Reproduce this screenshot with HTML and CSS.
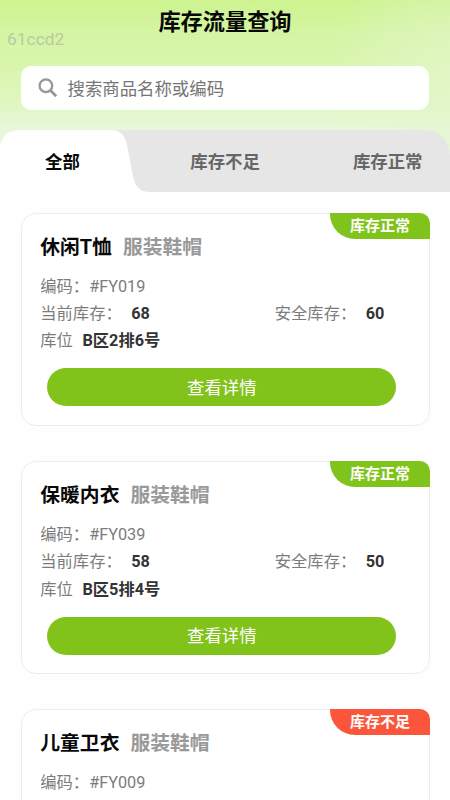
FILE: index.html
```html
<!DOCTYPE html>
<html lang="zh-CN">
<head>
<meta charset="utf-8">
<title>库存流量查询</title>
<link rel="stylesheet" href="styles.css">
</head>
<body>
<header class="header">
  <h1 class="title">库存流量查询</h1>
  <span class="mark">61ccd2</span>
  <div class="search">
    <svg class="search-icon" viewBox="0 0 20 20"><circle cx="7.9" cy="7.7" r="6.3" fill="none" stroke="#979797" stroke-width="2.3"/><path d="M12.3 12.3L18.2 18.2" stroke="#979797" stroke-width="2.8"/></svg>
    <span class="search-text">搜索商品名称或编码</span>
  </div>
</header>
<nav class="tabs">
  <svg class="tabs-shape" viewBox="0 0 450 62"><path d="M100 0H425C440 0 449 11 450 25V62H149C139 62 134 56 132 47L100 0Z" fill="#e6e6e6"/><path d="M0 62V15C3 5 9 0 20 0H111C121 0 125 6 127 15L132.500 44C135 56 139 62 149 62Z" fill="#fff"/></svg>
  <span class="tab tab-active">全部</span>
  <span class="tab">库存不足</span>
  <span class="tab tab-last">库存正常</span>
</nav>
<main class="list">
  <article class="card">
    <span class="badge">库存正常</span>
    <h2 class="name">休闲T恤<span class="category">服装鞋帽</span></h2>
    <div class="row">编码：#FY019</div>
    <div class="row"><div class="stock">当前库存：<b>68</b></div><div>安全库存：<b>60</b></div></div>
    <div class="row">库位<b>B区2排6号</b></div>
    <button class="detail">查看详情</button>
  </article>
  <article class="card">
    <span class="badge">库存正常</span>
    <h2 class="name">保暖内衣<span class="category">服装鞋帽</span></h2>
    <div class="row">编码：#FY039</div>
    <div class="row"><div class="stock">当前库存：<b>58</b></div><div>安全库存：<b>50</b></div></div>
    <div class="row">库位<b>B区5排4号</b></div>
    <button class="detail">查看详情</button>
  </article>
  <article class="card">
    <span class="badge badge-low">库存不足</span>
    <h2 class="name">儿童卫衣<span class="category">服装鞋帽</span></h2>
    <div class="row">编码：#FY009</div>
  </article>
</main>
</body>
</html>
```

FILE: styles.css
```css
* { box-sizing: border-box; }

html { background: #fefefe; }

body {
  margin: 0;
  height: 800px;
  overflow: hidden;
  font-family: Roboto, "Noto Sans CJK SC", sans-serif;
  color: #7c7c7c;
  background:
    radial-gradient(ellipse 120px 140px at 450px 75px, rgba(228, 246, 205, 0.7), rgba(228, 246, 205, 0)) no-repeat,
    linear-gradient(#cdf38f 0, #d5f5a4 35px, #daf6ae 70px, #e0f6c3 105px, #e8f7db 130px, #e8f7db 165px, #fefefe 166px);
}

.header {
  position: relative;
  height: 130px;
  padding: 6px 21px 0;
}

.title {
  margin: 0;
  font-size: 22.2px;
  line-height: 32px;
  font-weight: 700;
  text-align: center;
  color: #080808;
}

.mark {
  position: absolute;
  left: 7px;
  top: 28px;
  font-size: 17.4px;
  line-height: 22px;
  color: #b8caa4;
}

.search {
  display: flex;
  align-items: center;
  gap: 10px;
  width: 408px;
  height: 44px;
  margin-top: 28px;
  padding-left: 16.5px;
  border-radius: 10px;
  background: #fff;
  font-size: 17.4px;
  color: #757575;
}

.search-icon { width: 20px; height: 20px; }
.search-text { margin-top: -2px; }

.tabs {
  position: relative;
  display: flex;
  align-items: center;
  height: 62px;
  padding: 0 0 1px 45px;
}

.tabs-shape {
  position: absolute;
  left: 0;
  top: 0;
  width: 450px;
  height: 62px;
}

.tab {
  position: relative;
  font-size: 17.4px;
  font-weight: 700;
  color: #666;
}

.tab-active { margin-right: 110.5px; color: #080808; }
.tab-last { margin-left: 93px; }

.list {
  display: flex;
  flex-direction: column;
  gap: 35px;
  height: 608px;
  overflow: hidden;
  padding: 20.5px 20px 0 20.5px;
  background: #fefefe;
}

.card {
  position: relative;
  flex: none;
  height: 213.3px;
  padding: 18px 19px 0 18.8px;
  border: 1px solid #ececec;
  border-radius: 15px;
  background: #fff;
}

.badge {
  position: absolute;
  top: -1px;
  right: -1px;
  width: 100px;
  height: 26px;
  border-radius: 0 10px 0 25px;
  background: #80c31a;
  color: #fff;
  font-size: 15px;
  line-height: 27px;
  font-weight: 700;
  text-align: center;
}

.badge-low { background: #fb563b; }

.name {
  margin: 0 0 9.2px;
  font-size: 19.8px;
  line-height: 32px;
  font-weight: 700;
  color: #080808;
}

.category { margin-left: 11px; color: #999; }

.row {
  display: flex;
  height: 27.3px;
  font-size: 16.3px;
  line-height: 27.3px;
  white-space: nowrap;
}

.row b { margin-left: 9.5px; color: #333; }

.stock { width: 234.5px; }

.detail {
  display: block;
  width: 349px;
  height: 38px;
  margin: 13.8px 0 0 7px;
  padding: 0 0 2px;
  border: 0;
  border-radius: 19px;
  background: #82c31b;
  color: #fff;
  font: inherit;
  font-size: 17.4px;
}
```
